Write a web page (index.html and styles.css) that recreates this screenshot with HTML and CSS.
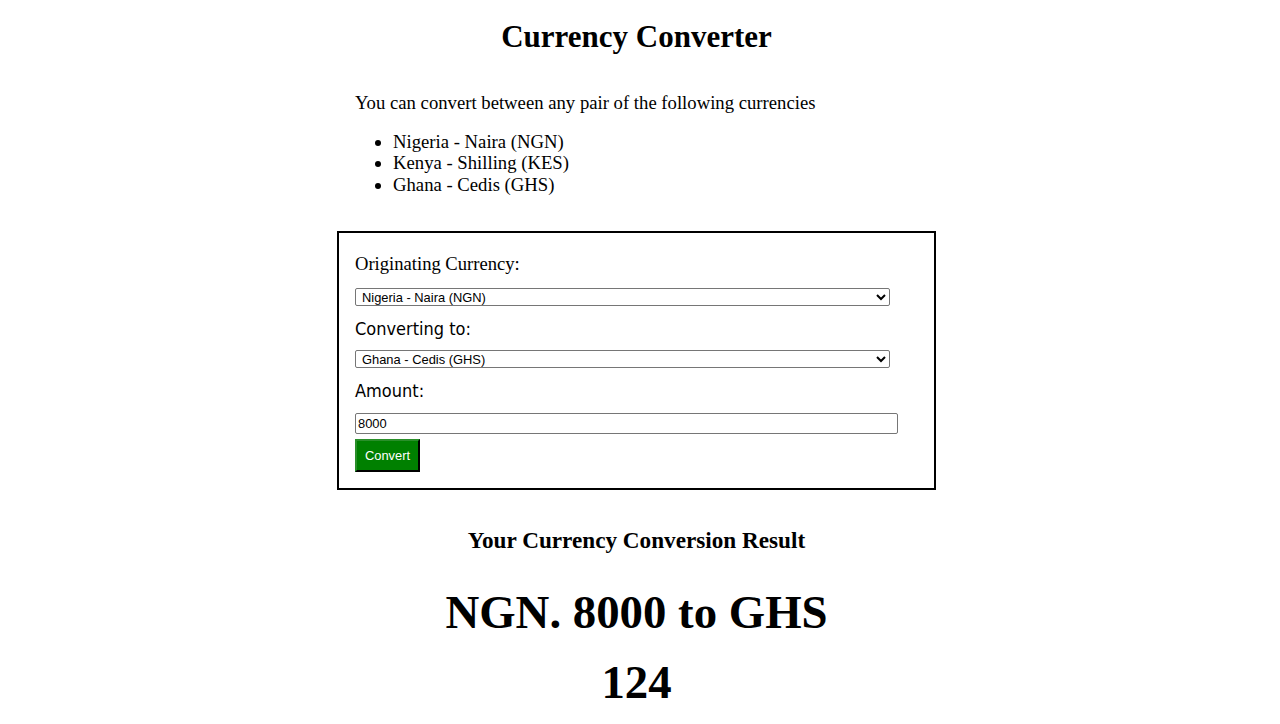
FILE: index.html
```html
<!DOCTYPE html>
<html lang="en">
<head>
<meta charset="utf-8">
<title>Currency Converter</title>
<link rel="stylesheet" href="styles.css">
</head>
<body>
<main class="page">
  <h1 class="title">Currency Converter</h1>
  <section class="intro">
    <p class="intro-text">You can convert between any pair of the following currencies</p>
    <ul class="currency-list">
      <li>Nigeria - Naira (NGN)</li>
      <li>Kenya - Shilling (KES)</li>
      <li>Ghana - Cedis (GHS)</li>
    </ul>
  </section>
  <form class="converter">
    <label class="label label-serif" for="from">Originating Currency:</label>
    <select class="select" id="from">
      <option selected>Nigeria - Naira (NGN)</option>
      <option>Kenya - Shilling (KES)</option>
      <option>Ghana - Cedis (GHS)</option>
    </select>
    <label class="label label-sans" for="to">Converting to:</label>
    <select class="select" id="to">
      <option>Nigeria - Naira (NGN)</option>
      <option>Kenya - Shilling (KES)</option>
      <option selected>Ghana - Cedis (GHS)</option>
    </select>
    <label class="label label-sans" for="amount">Amount:</label>
    <input class="amount" id="amount" type="text" value="8000">
    <button class="convert" type="button">Convert</button>
  </form>
  <section class="result">
    <h2 class="result-title">Your Currency Conversion Result</h2>
    <h1 class="result-value">NGN. 8000 to GHS<br>124</h1>
  </section>
</main>
</body>
</html>
```

FILE: styles.css
```css
html, body {
  margin: 0;
  padding: 0;
  background: #ffffff;
}

body {
  margin: 0 7px 0 0;
  font-family: "Liberation Serif", "Times New Roman", serif;
  color: #000;
}

.page {
  width: 599px;
  margin: 0 auto;
}

.title {
  margin: 19px 0 37px;
  font-size: 31px;
  line-height: 36px;
  font-weight: bold;
  text-align: center;
}

.intro {
  padding: 0 18px;
  font-size: 18.7px;
  line-height: 21.5px;
}

.intro-text {
  margin: 0 0 17px;
}

.currency-list {
  margin: 0 0 35.5px;
  padding-left: 38px;
}

.converter {
  display: flex;
  flex-direction: column;
  align-items: flex-start;
  border: 2px solid #000;
  padding: 20px 16px 16px;
}

.label {
  display: block;
  margin-bottom: 12.5px;
}

.label-serif {
  font-family: "Liberation Serif", "Times New Roman", serif;
  font-size: 18.6px;
  line-height: 21.5px;
  margin-bottom: 13.5px;
}

.label-sans {
  font-family: "DejaVu Sans Condensed", "DejaVu Sans", Verdana, sans-serif;
  font-stretch: condensed;
  font-size: 18px;
  line-height: 19px;
}

.select {
  box-sizing: border-box;
  width: 535px;
  height: 18px;
  margin: 0 0 13px;
  padding: 0 2px;
  font-family: "Liberation Sans", Arial, sans-serif;
  font-size: 12.9px;
  color: #000;
  background: #fff;
  border: 1px solid #767676;
  border-radius: 2px;
}

.amount {
  box-sizing: border-box;
  width: 543px;
  height: 21px;
  margin: 0 0 5px;
  padding: 1px 2px;
  font-family: "Liberation Sans", Arial, sans-serif;
  font-size: 12.9px;
  color: #000;
  border: 1px solid #767676;
  border-radius: 2px;
}

.convert {
  box-sizing: border-box;
  width: 65px;
  height: 33px;
  padding: 0;
  font-family: "Liberation Sans", Arial, sans-serif;
  font-size: 12.9px;
  color: #fff;
  background: #008000;
  border: 2px outset #008000;
  border-color: #2a8f2a #0b4d0b #0b4d0b #2a8f2a;
}

.result {
  text-align: center;
}

.result-title {
  margin: 37px 0 23.5px;
  font-size: 23.2px;
  line-height: 27px;
  font-weight: bold;
}

.result-value {
  margin: 0;
  font-size: 46.8px;
  line-height: 70px;
  font-weight: bold;
}
```
